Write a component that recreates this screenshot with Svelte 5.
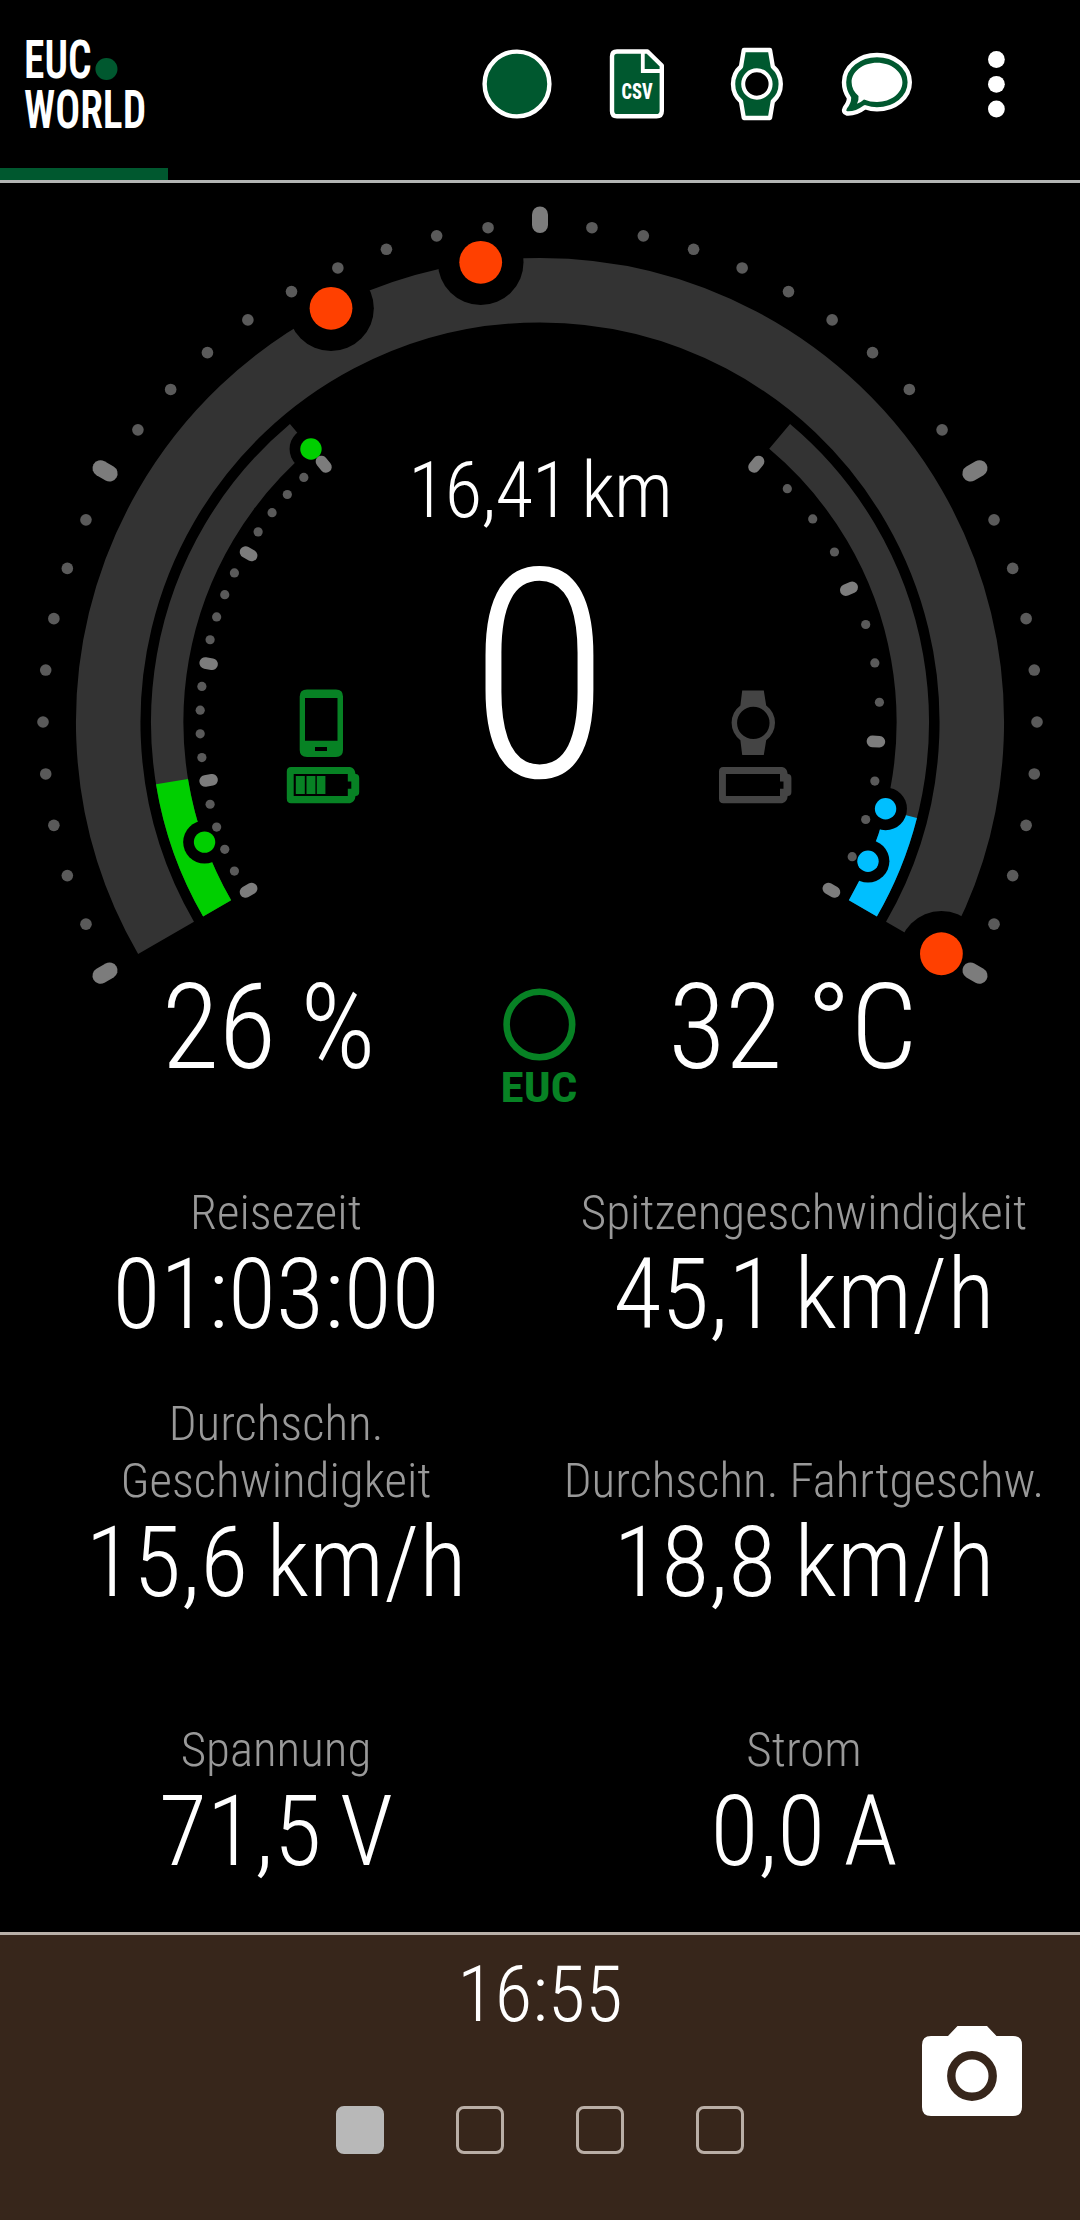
<script>
  export let distance = "16,41 km";
  export let speed = "0";
  export let battery = "26 %";
  export let temperature = "32 °C";
  export let clock = "16:55";

  const stats = [
    { label: "Reisezeit", value: "01:03:00" },
    { label: "Spitzengeschwindigkeit", value: "45,1 km/h" },
    { label: "Durchschn. Geschwindigkeit", value: "15,6 km/h" },
    { label: "Durchschn. Fahrtgeschw.", value: "18,8 km/h" },
    { label: "Spannung", value: "71,5 V" },
    { label: "Strom", value: "0,0 A" },
  ];

  const pages = [true, false, false, false];

  // Gauge centre. Angles are degrees clockwise from twelve o'clock.
  const cx = 540;
  const cy = 722;

  function point(r, angle) {
    const a = (angle * Math.PI) / 180;
    return { x: cx + r * Math.sin(a), y: cy - r * Math.cos(a) };
  }

  function arc(r, from, to) {
    const a = point(r, from);
    const b = point(r, to);
    const large = Math.abs(to - from) > 180 ? 1 : 0;
    const sweep = to > from ? 1 : 0;
    return `M${a.x} ${a.y}A${r} ${r} 0 ${large} ${sweep} ${b.x} ${b.y}`;
  }

  function ticks(from, to, count, every, r, length) {
    return Array.from({ length: count + 1 }, (_, i) => {
      const angle = from + ((to - from) * i) / count;
      return { major: i % every === 0, a: point(r, angle), b: point(r + length, angle) };
    });
  }

  const speedTicks = ticks(-120, 120, 40, 10, 497, 10.5);
  const sideTicks = [
    ...ticks(-120, -40, 20, 5, 340, -7),
    ...ticks(40, 120, 12, 4, 340, -7),
  ];

  const markers = [
    { ...point(463.5, -26.8), r: 21.4, color: "#ff4000" },
    { ...point(463.5, -7.35), r: 21.4, color: "#ff4000" },
    { ...point(463.5, 120), r: 21.4, color: "#ff4000" },
    { ...point(356.3, -40), r: 10.7, color: "#00cf00" },
    { ...point(356.3, -109.7), r: 10.7, color: "#00cf00" },
    { ...point(356.3, 104.1), r: 10.7, color: "#00bfff" },
    { ...point(356.3, 113), r: 10.7, color: "#00bfff" },
  ];
</script>

<div class="app">
  <header>
    <div class="tab">
      <div class="logo">
        <span class="name">EUC<i></i></span>
        <span class="name">WORLD</span>
      </div>
    </div>

    <nav>
      <svg width="120" height="120" viewBox="457 24 120 120">
        <circle class="filled" cx="517" cy="84" r="32.4" />
      </svg>
      <svg width="120" height="120" viewBox="577 24 120 120">
        <path class="filled" d="M617 51.5H647.5L661.8 65.5V111Q661.8 116.3 656.5 116.3H617Q612 116.3 612 111V56.5Q612 51.5 617 51.5Z" />
        <path class="outline" d="M642.8 51.5V71H662" />
        <text class="csv" x="621.5" y="98.7" textLength="31" lengthAdjust="spacingAndGlyphs">CSV</text>
      </svg>
      <svg width="120" height="120" viewBox="697 24 120 120">
        <path class="filled" d="M743.8 50H770L772.8 66.5A23.2 23.2 0 0 1 772.8 101.5L770 118H743.8L741 101.5A23.2 23.2 0 0 1 741 66.5Z" />
        <circle class="hole" cx="756.9" cy="84" r="13.7" />
      </svg>
      <svg width="120" height="120" viewBox="817 24 120 120">
        <path class="filled" d="M877 55C895 55 909.8 67 909.8 82.3S895 109.4 877 109.4Q871 109.4 865 107.2Q856 114 847 113.5Q842.5 112.5 845 107.5Q849 102.5 849 98Q844 91 844 82.3C844 67 859 55 877 55Z" />
        <path class="solid" d="M877 62.7C891 62.7 902.4 71.5 902.4 82.3S891 102 877 102Q870 102 864 99.5Q862 101.5 857 103.8Q859 100 858.5 96Q851.6 90 851.6 82.3C851.6 71.5 863 62.7 877 62.7Z" />
      </svg>
      <svg width="120" height="120" viewBox="937 24 120 120">
        <circle class="solid" cx="996.4" cy="59.5" r="8.4" />
        <circle class="solid" cx="996.4" cy="84.3" r="8.4" />
        <circle class="solid" cx="996.4" cy="109" r="8.4" />
      </svg>
    </nav>
  </header>

  <svg class="gauge" width="1080" height="957" viewBox="0 183 1080 957">
    <path class="track" d={arc(431.8, -120, 120)} stroke-width="64.5" />
    <path class="track" d={arc(372.8, -120, -40)} stroke-width="32.4" />
    <path class="track" d={arc(372.8, 40, 120)} stroke-width="32.4" />
    <path class="battery-level" d={arc(372.8, -120, -99.2)} stroke-width="32.4" />
    <path class="temperature-level" d={arc(372.8, 104.3, 120)} stroke-width="32.4" />

    {#each markers as m}
      <circle cx={m.x} cy={m.y} r={m.r * 2} fill="#000" />
    {/each}
    {#each markers as m}
      <circle cx={m.x} cy={m.y} r={m.r} fill={m.color} />
    {/each}

    {#each speedTicks as t}
      {#if t.major}
        <line class="major" x1={t.a.x} y1={t.a.y} x2={t.b.x} y2={t.b.y} stroke-width="16" />
      {:else}
        <circle class="minor" cx={t.a.x} cy={t.a.y} r="5.8" />
      {/if}
    {/each}
    {#each sideTicks as t}
      {#if t.major}
        <line class="major" x1={t.a.x} y1={t.a.y} x2={t.b.x} y2={t.b.y} stroke-width="11.6" />
      {:else}
        <circle class="minor" cx={t.a.x} cy={t.a.y} r="4.6" />
      {/if}
    {/each}

    <text class="distance" x="540" y="517.3">{distance}</text>
    <text class="speed" x="539.5" y="776.5">{speed}</text>
    <text class="side" x="268.5" y="1068">{battery}</text>
    <text class="side" x="792.5" y="1068">{temperature}</text>

    <!-- phone and its battery -->
    <g class="online">
      <path fill-rule="evenodd" d="M307 689.5H336Q343 689.5 343 696.5V750Q343 757 336 757H307Q299.7 757 299.7 750V696.5Q299.7 689.5 307 689.5ZM305 698V740.8H337.5V698ZM315 747V751H327V747Z" />
      <path fill-rule="evenodd" d="M291 767H350Q355 768 355.5 774Q359.2 774 359.2 778V792Q359.2 796 355.5 796Q355 802 350 803.2H291Q286.8 803.2 286.8 798.5V771.5Q286.8 767 291 767ZM293.7 774V796H347.8V788.7H351.3V781.5H347.8V774Z" />
      <path d="M295.8 776H304.8V794H295.8ZM306.5 776H315.4V794H306.5ZM316.8 776H325.4V794H316.8Z" />
    </g>

    <!-- watch and its battery -->
    <g class="offline">
      <path fill-rule="evenodd" d="M742.2 690.5H763.8L766.2 705.5A21.5 21.5 0 0 1 766.2 740.2L763.8 755H742.2L740.4 740.2A21.5 21.5 0 0 1 740.4 705.5ZM753.3 706.7A16.2 16.2 0 1 0 753.3 739.1A16.2 16.2 0 1 0 753.3 706.7Z" />
      <path transform="translate(432.2 0)" fill-rule="evenodd" d="M291 767H350Q355 768 355.5 774Q359.2 774 359.2 778V792Q359.2 796 355.5 796Q355 802 350 803.2H291Q286.8 803.2 286.8 798.5V771.5Q286.8 767 291 767ZM293.7 774V796H347.8V788.7H351.3V781.5H347.8V774Z" />
    </g>

    <circle class="wheel" cx="539.4" cy="1024.5" r="32.8" />
    <text class="euc" x="500.5" y="1102" textLength="77" lengthAdjust="spacingAndGlyphs">EUC</text>
  </svg>

  <main>
    {#each stats as s}
      <div class="stat">
        <div class="label">{s.label}</div>
        <div class="value">{s.value}</div>
      </div>
    {/each}
  </main>

  <footer>
    <div class="clock">{clock}</div>
    <div class="pages">
      {#each pages as active}
        <span class:active></span>
      {/each}
    </div>
    <svg class="camera" width="100" height="90" viewBox="922 2026 100 90">
      <path d="M957.5 2026H987L996.5 2036H1013Q1022 2036 1022 2045V2107Q1022 2116 1013 2116H931Q922 2116 922 2107V2045Q922 2036 931 2036H948Z" />
      <circle cx="972" cy="2076" r="20.7" />
    </svg>
  </footer>
</div>

<style>
  :global(body) {
    margin: 0;
    background: #000;
  }
  .app {
    display: flex;
    flex-direction: column;
    width: 1080px;
    height: 2220px;
    background: #000;
    color: #fff;
    font-family: "Roboto Condensed", Roboto, sans-serif;
    font-stretch: 75%;
    font-weight: 300;
    overflow: hidden;
  }
  svg {
    display: block;
  }
  header {
    display: flex;
    justify-content: space-between;
    height: 180px;
    border-bottom: 3px solid #b3b5b4;
  }
  .tab {
    box-sizing: border-box;
    width: 168px;
    padding: 34px 0 0 24px;
    border-bottom: 12px solid #00582f;
  }
  .logo {
    display: flex;
    flex-direction: column;
    align-items: flex-start;
    transform: scaleX(0.76);
    transform-origin: 0 0;
  }
  .name {
    display: flex;
    align-items: center;
    height: 50px;
    font-size: 54.5px;
    line-height: 50px;
    font-weight: 650;
  }
  .name i {
    width: 29px;
    height: 22px;
    margin: 20px 0 0 5px;
    border-radius: 50%;
    background: #00582f;
  }
  nav {
    display: flex;
    padding: 24px 23px 0 0;
  }
  .filled {
    fill: #00582f;
    stroke: #fff;
    stroke-width: 4.4;
    stroke-linejoin: round;
  }
  .outline {
    fill: none;
    stroke: #fff;
    stroke-width: 3.8;
  }
  .hole {
    fill: #000;
    stroke: #fff;
    stroke-width: 4;
  }
  .solid {
    fill: #fff;
  }
  .csv {
    font-size: 21.5px;
    font-weight: 800;
    fill: #fff;
  }

  .track {
    fill: none;
    stroke: #333;
  }
  .battery-level {
    fill: none;
    stroke: #00cf00;
  }
  .temperature-level {
    fill: none;
    stroke: #00bfff;
  }
  .major {
    stroke: #7c7c7c;
    stroke-linecap: round;
  }
  .minor {
    fill: #5a5a5a;
  }
  .gauge text {
    fill: #fff;
    text-anchor: middle;
  }
  .gauge .distance {
    font-size: 77px;
    letter-spacing: -0.8px;
    word-spacing: -4px;
  }
  .gauge .speed {
    font-size: 292px;
  }
  .gauge .side {
    font-size: 118px;
    letter-spacing: -0.5px;
    word-spacing: -1.5px;
  }
  .gauge .euc {
    font-size: 42px;
    font-weight: 700;
    text-anchor: start;
    fill: #078224;
  }
  .online {
    fill: #078224;
  }
  .offline {
    fill: #444;
  }
  .wheel {
    fill: none;
    stroke: #078224;
    stroke-width: 6.6;
  }

  main {
    display: grid;
    grid-template-columns: 528px 528px;
    grid-template-rows: repeat(3, 268.5px);
    justify-content: center;
    height: 848px;
    margin-top: -56px;
  }
  .stat {
    display: flex;
    flex-direction: column;
    justify-content: flex-end;
    align-items: center;
    text-align: center;
  }
  .label {
    max-width: 500px;
    font-size: 49px;
    line-height: 57px;
    color: #999;
  }
  .value {
    margin-top: -2px;
    padding-bottom: 2px;
    font-size: 98.5px;
    line-height: 112px;
    word-spacing: -4px;
  }

  footer {
    position: relative;
    flex: 1;
    display: flex;
    flex-direction: column;
    align-items: center;
    border-top: 3px solid #b8afa8;
    background: #37261b;
  }
  .clock {
    margin-top: 14px;
    font-size: 77px;
    line-height: 92px;
  }
  .pages {
    display: flex;
    gap: 72px;
    margin-top: 65px;
  }
  .pages span {
    box-sizing: border-box;
    width: 48px;
    height: 48px;
    border: 3px solid #b9aea6;
    border-radius: 8px;
  }
  .pages span.active {
    border-color: #b8b8b8;
    background: #b8b8b8;
  }
  .camera {
    position: absolute;
    right: 58px;
    top: 91px;
    fill: #fff;
  }
  .camera circle {
    stroke: #37261b;
    stroke-width: 8.4;
  }
</style>
